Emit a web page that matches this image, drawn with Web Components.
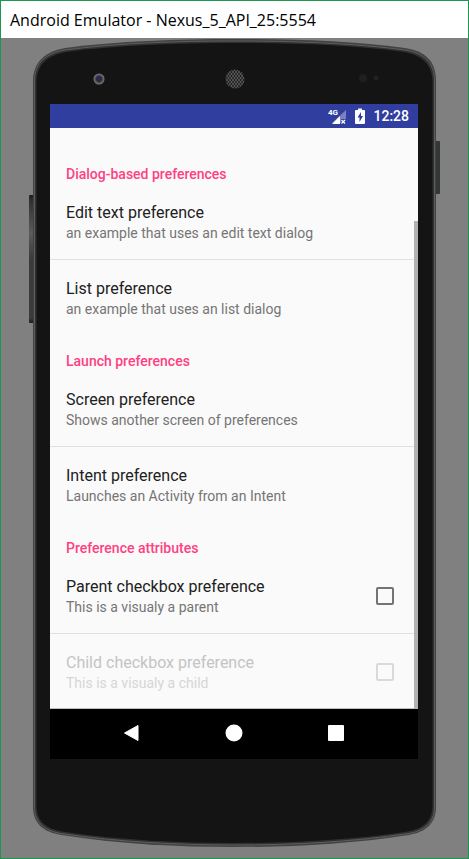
<!DOCTYPE html>
<html lang="en">
<head>
<meta charset="utf-8">
<title>Android Emulator</title>
<style>
html, body { margin: 0; min-height: 100%; }
body { display: flex; min-height: 100vh; font-family: Roboto, "Noto Sans", sans-serif; }
</style>
</head>
<body>
<emulator-window heading="Android Emulator - Nexus_5_API_25:5554">
  <phone-frame>
    <status-bar time="12:28"></status-bar>
    <pref-list>
      <pref-category label="Dialog-based preferences">
        <pref-item label="Edit text preference" summary="an example that uses an edit text dialog"></pref-item>
        <pref-item label="List preference" summary="an example that uses an list dialog"></pref-item>
      </pref-category>
      <pref-category label="Launch preferences">
        <pref-item label="Screen preference" summary="Shows another screen of preferences"></pref-item>
        <pref-item label="Intent preference" summary="Launches an Activity from an Intent"></pref-item>
      </pref-category>
      <pref-category label="Preference attributes">
        <pref-item type="checkbox" label="Parent checkbox preference" summary="This is a visualy a parent"></pref-item>
        <pref-item type="checkbox" disabled label="Child checkbox preference" summary="This is a visualy a child"></pref-item>
      </pref-category>
    </pref-list>
    <nav-bar></nav-bar>
  </phone-frame>
</emulator-window>
<script>
class Base extends HTMLElement {
  connectedCallback() {
    if (this.shadowRoot) return;
    this.attachShadow({ mode: "open" }).innerHTML = this.view();
  }
}

customElements.define("emulator-window", class extends Base {
  view() {
    return `<style>
      :host { flex: 1; display: flex; flex-direction: column; box-sizing: border-box; border: 1px solid #1f9552; background: #808080; min-width: 0; }
      header { background: #fff; height: 37px; padding: 0 9px; display: flex; align-items: center; }
      h1 { margin: 0; font: 400 16px/20px "Open Sans", "Noto Sans", sans-serif; color: #000; white-space: nowrap; }
      main { flex: 1; display: flex; padding: 1px 28px 11px; }
    </style>
    <header><h1>${this.getAttribute("heading")}</h1></header>
    <main><slot></slot></main>`;
  }
});

customElements.define("phone-frame", class extends Base {
  view() {
    return `<style>
      :host { flex: 1; display: grid; min-width: 0; }
      svg, section { grid-area: 1 / 1; }
      svg { width: 100%; height: 100%; min-height: 0; contain: size; }
      section { position: relative; display: flex; flex-direction: column; margin: 65px 22px 88px 21px; }
    </style>
    <svg viewBox="0 0 411 808" preserveAspectRatio="none" aria-hidden="true">
      <defs>
        <linearGradient id="key" x1="0" y1="0" x2="0" y2="1">
          <stop offset="0" stop-color="#1c1c1c"/><stop offset=".04" stop-color="#303132"/>
          <stop offset=".3" stop-color="#5a5b5c"/><stop offset=".5" stop-color="#3a3b3c"/>
          <stop offset=".96" stop-color="#3a3b3c"/><stop offset="1" stop-color="#1c1c1c"/>
        </linearGradient>
        <radialGradient id="lens">
          <stop offset="0" stop-color="#2828b4"/><stop offset=".25" stop-color="#24245c"/>
          <stop offset=".45" stop-color="#2c2c30"/><stop offset=".7" stop-color="#555558"/><stop offset="1" stop-color="#7c7c7e"/>
        </radialGradient>
        <pattern id="mesh" width="3" height="4" patternUnits="userSpaceOnUse">
          <rect width="3" height="4" fill="#5e5e5e"/>
          <circle cx="1.500" cy="1" r=".9" fill="#141414"/>
          <circle cx="0" cy="3" r=".9" fill="#141414"/><circle cx="3" cy="3" r=".9" fill="#141414"/>
        </pattern>
      </defs>
      <rect x="0" y="156" width="5" height="128" rx="1" fill="url(#key)"/>
      <rect x="406" y="102" width="5" height="53" rx="1" fill="#343536"/>
      <path d="M4 42C4 22 18 12 36 9C88 2 150 0 206 0C262 0 324 2 376 9C396 12 407 22 407 42V768C407 784 397 793 380 796C322 805 264 808 206 808C148 808 90 805 32 796C14 793 4 784 4 768Z" fill="#414243"/>
      <path d="M5.500 42C5.500 23 18.500 14 36 11C88 4 150 2 206 2C262 2 324 4 376 11C394 14 405.500 23 405.500 42V768C405.500 783 396 791.500 380 794.500C322 803 264 806 206 806C148 806 90 803 32 794.500C15 791.500 5.500 783 5.500 768Z" fill="#303132" stroke="#5c5d5f" stroke-width="1"/>
      <path d="M7.500 43C7.500 25 19.500 16 37 13C89 6 150 4 206 4C262 4 323 6 375 13C392 16 403.500 25 403.500 43V767C403.500 781 395 789.500 379 792.500C322 801 264 804 206 804C148 804 90 801 33 792.500C16 789.500 7.500 781 7.500 767Z" fill="#141414"/>
      <circle cx="70" cy="40" r="5.500" fill="url(#lens)"/>
      <circle cx="206" cy="40" r="9.500" fill="url(#mesh)"/>
      <circle cx="334" cy="39" r="4" fill="#1f1f20"/>
      <circle cx="347" cy="39" r="2.500" fill="#212122"/>
    </svg>
    <section><slot></slot></section>`;
  }
});

customElements.define("status-bar", class extends Base {
  view() {
    return `<style>
      :host { display: flex; align-items: center; justify-content: flex-end; height: 24px; padding-right: 9px; background: #303f9f; color: #fff; }
      svg { display: block; }
      .cell { margin-right: 8px; }
      .battery { margin-right: 8px; }
      time { font: 500 14px/24px Roboto, sans-serif; }
    </style>
    <svg class="cell" width="20" height="18" viewBox="0 0 20 18" role="img" aria-label="4G signal">
      <path d="M19 3V12H14V16H5Z" fill="#fff" opacity=".35"/>
      <path d="M13 9V17H5Z" fill="#fff"/>
      <text x="1" y="8" font-family="Roboto, sans-serif" font-size="8" font-weight="700" fill="#fff">4G</text>
      <path d="M14.500 13L18 16.500M18 13L14.500 16.500" stroke="#fff" stroke-width="1.200"/>
    </svg>
    <svg class="battery" width="10" height="16" viewBox="0 0 10 16" role="img" aria-label="Battery charging">
      <path d="M3 .5H7V2H9Q10 2 10 3V15Q10 16 9 16H1Q0 16 0 15V3Q0 2 1 2H3Z" fill="#fff"/>
      <path d="M6 4L2.500 9.500H4.500V14L8 8H6Z" fill="#303f9f"/>
    </svg>
    <time>${this.getAttribute("time")}</time>`;
  }
});

customElements.define("pref-list", class extends Base {
  view() {
    return `<style>
      :host { position: relative; flex: 1; display: block; padding-top: 20px; background: #fafafa; box-shadow: inset 0 -1px #bdbdbd; }
      i { position: absolute; right: 0; top: 16%; bottom: 0; width: 4px; background: #b1b1b1; }
    </style><slot></slot><i></i>`;
  }
});

customElements.define("pref-category", class extends Base {
  view() {
    return `<style>
      :host { display: block; }
      h2 { margin: 0; padding: 16px 16px 0; font: 500 14px/20px Roboto, sans-serif; color: #ff4081; }
      ::slotted(:not(:last-child)) { border-bottom: 1px solid #e0e0e0; }
    </style><h2>${this.getAttribute("label")}</h2><slot></slot>`;
  }
});

customElements.define("pref-item", class extends Base {
  view() {
    const check = this.getAttribute("type") === "checkbox";
    const off = this.hasAttribute("disabled") ? "disabled" : "";
    const tag = check ? "label" : "button";
    return `<style>
      :host { display: block; }
      .row { display: flex; align-items: center; box-sizing: border-box; width: 100%; padding: 18px 24px 16px 16px; border: 0; background: none; text-align: left; color: inherit; font-family: inherit; }
      .text { flex: 1; }
      .text span { display: block; }
      .label { font: 400 16px/22px Roboto, sans-serif; color: #212121; }
      .summary { font: 400 14px/19px Roboto, sans-serif; color: #757575; }
      :host([disabled]) .label { color: #c4c4c4; }
      :host([disabled]) .summary { color: #d6d6d6; }
      input { appearance: none; box-sizing: border-box; width: 18px; height: 18px; margin: 0 0 2px; border: 2px solid #737373; border-radius: 2px; }
      input:checked { background: #ff4081; border-color: #ff4081; }
      input:disabled { border-color: #d9d9d9; }
    </style>
    <${tag} class="row">
      <span class="text"><span class="label">${this.getAttribute("label")}</span><span class="summary">${this.getAttribute("summary")}</span></span>
      ${check ? `<input type="checkbox" ${off}>` : ""}
    </${tag}>`;
  }
});

customElements.define("nav-bar", class extends Base {
  view() {
    return `<style>
      :host { display: flex; justify-content: center; box-sizing: border-box; height: 50px; padding-bottom: 2px; background: #000; }
      button { width: 102px; padding: 0; border: 0; background: none; display: flex; align-items: center; justify-content: center; }
    </style>
    <button aria-label="Back"><svg width="18" height="18" viewBox="0 0 18 18"><path d="M15 1.500V16.500L1.500 9Z" fill="#fff" stroke="#fff" stroke-linejoin="round"/></svg></button>
    <button aria-label="Home"><svg width="18" height="18" viewBox="0 0 18 18"><circle cx="9" cy="9" r="8.500" fill="#fff"/></svg></button>
    <button aria-label="Overview"><svg width="18" height="18" viewBox="0 0 18 18"><rect x="1" y="1" width="16" height="16" rx="1" fill="#fff"/></svg></button>`;
  }
});
</script>
</body>
</html>
